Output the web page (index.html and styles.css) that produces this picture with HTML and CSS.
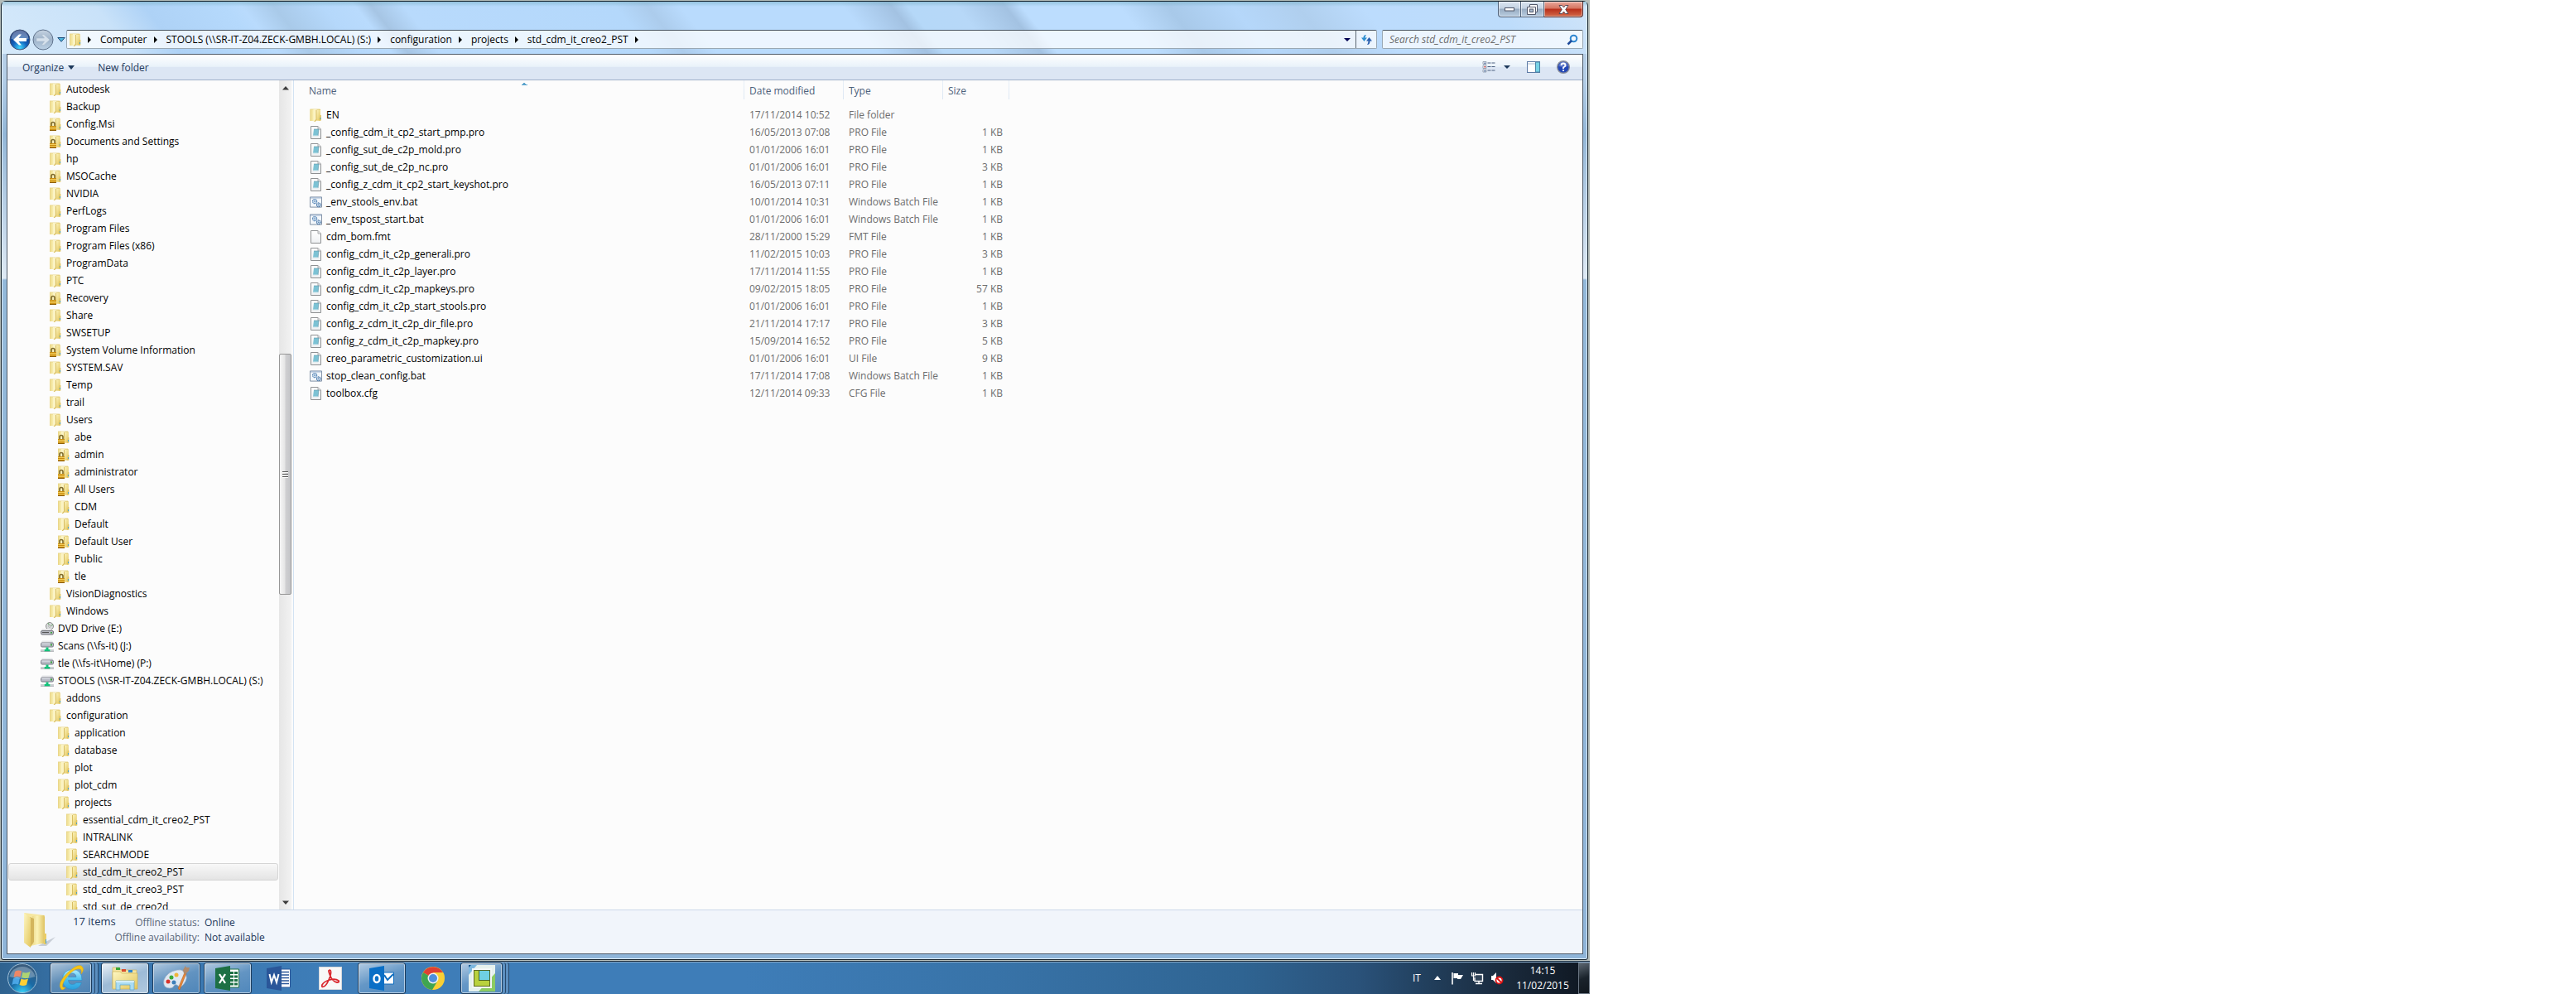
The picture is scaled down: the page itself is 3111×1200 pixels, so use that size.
FILE: index.html
```html
<!DOCTYPE html>
<html lang="en">
<head>
<meta charset="utf-8">
<title>std_cdm_it_creo2_PST</title>
<link rel="stylesheet" href="styles.css">
</head>
<body>
<svg class="sprites" aria-hidden="true">
  <defs>
    <linearGradient id="gold" x1="0" x2="1" y1="0" y2="0"><stop offset="0" stop-color="#ecd98a"/><stop offset=".4" stop-color="#fbf3b8"/><stop offset="1" stop-color="#dfc25f"/></linearGradient>
    <linearGradient id="gold2" x1="0" x2="1" y1="0" y2="1"><stop offset="0" stop-color="#fdf6c3"/><stop offset="1" stop-color="#e3c65c"/></linearGradient>
    <radialGradient id="orb" cx=".5" cy=".9" r=".9"><stop offset="0" stop-color="#3fd8ff"/><stop offset=".4" stop-color="#1263bd"/><stop offset="1" stop-color="#10286e"/></radialGradient>
    <linearGradient id="grayOrb" x1="0" x2="0" y1="0" y2="1"><stop offset="0" stop-color="#c6d3e1"/><stop offset=".5" stop-color="#9db2c9"/><stop offset="1" stop-color="#bcd2e6"/></linearGradient>
    <radialGradient id="startOrb" cx=".5" cy="1" r=".95"><stop offset="0" stop-color="#37d3fa"/><stop offset=".45" stop-color="#1a6aa5"/><stop offset="1" stop-color="#3a5c7d"/></radialGradient>
    <linearGradient id="ie" x1="0" x2="0" y1="0" y2="1"><stop offset="0" stop-color="#b4ecfd"/><stop offset=".5" stop-color="#4cc0ef"/><stop offset="1" stop-color="#2a9fdc"/></linearGradient>
    <linearGradient id="page" x1="0" x2="0" y1="0" y2="1"><stop offset="0" stop-color="#fff"/><stop offset="1" stop-color="#eef0f2"/></linearGradient>
  </defs>
  <symbol id="folder" viewBox="0 0 14 16">
    <path d="M0 1h5v14H0zM8 1h4.500v13.500H8z" fill="url(#gold)"/>
    <path d="M8 2h4.500v12.500H7z" fill="url(#gold2)"/>
    <path d="M12 8h1.300v6.500H11z" fill="#e0c25e"/>
    <path d="M12 11h1v2h-1z" fill="#4aa3c8"/>
    <path d="M0 1h1v14H0zM0 .5h12v1H0z" fill="#ead78c"/>
    <path d="M5 2h3v12l-2 2H5z" fill="#d8bd62"/>
    <path d="M4 1h2l1 1v11l-2 2.500H4z" fill="#fbf3c4"/>
  </symbol>
  <symbol id="locked" viewBox="0 0 14 16">
    <use href="#folder" width="14" height="16"/>
    <path d="M2 10V7.500a2 2 0 0 1 4 0V10" fill="none" stroke="#7d6a2c" stroke-width="1.600"/>
    <path d="M0 10h8v6H0z" fill="#c98d10"/><path d="M0 11.500h8M0 13.500h8" stroke="#f2cc5a"/><path d="M0 15.500h8" stroke="#8f620a"/>
  </symbol>
  <symbol id="netdrive" viewBox="0 0 16 15">
    <path d="M2 1h12l2 3H0z" fill="#e6e7ea"/><rect x=".5" y="3.500" width="15" height="5" rx="1.500" fill="#b9bcc6" stroke="#7a7d87"/>
    <path d="M1.500 4.500h10" stroke="#eceef4"/><path d="M12 5h2v2h-2z" fill="#3da53d"/>
    <path d="M6.500 9h3v2.500h2V14h-7v-2.500h2z" fill="#13c27a"/><path d="M0 12.500h4M12 12.500h4" stroke="#9aa0a6"/><path d="M0 14h16" stroke="#8b9196" stroke-width=".6"/>
  </symbol>
  <symbol id="dvd" viewBox="0 0 16 16">
    <circle cx="11" cy="5" r="4.500" fill="#d9dcdd" stroke="#8d8d8d"/><path d="M11 5L9 1M11 5l4-2" stroke="#68a368"/><circle cx="11" cy="5" r="1.300" fill="#fff" stroke="#888" stroke-width=".6"/>
    <path d="M2 8h8l4 1.500 2 1.500H0z" fill="#e7e7e9"/><rect x=".5" y="10.500" width="15" height="4.500" rx="1.500" fill="#b8bac2" stroke="#6f7178"/><path d="M2 12.500h8" stroke="#555"/><path d="M12 12h2v1.500h-2z" fill="#3da53d"/>
  </symbol>
  <symbol id="blank" viewBox="0 0 15 16">
    <path d="M1.500.5h8.500l3.500 3.500v11.500h-12z" fill="url(#page)" stroke="#8f9193"/><path d="M10 .5V4h3.500" fill="#e5e7e9" stroke="#a9abad"/>
  </symbol>
  <symbol id="doc" viewBox="0 0 15 16">
    <path d="M1.500.5h8.500l3.500 3.500v11.500h-12z" fill="url(#page)" stroke="#8f9193"/><path d="M10 .5V4h3.500" fill="#e5e7e9" stroke="#a9abad"/>
    <path d="M5 4h6l-1 8H4z" fill="#7cc2d4"/><path d="M5 4h6l-1 8" fill="none" stroke="#5c93a6" stroke-width=".6"/><path d="M4 12h6" stroke="#d5e9ee"/>
  </symbol>
  <symbol id="bat" viewBox="0 0 16 16">
    <path d="M.5 1.500h15v13H.5z" fill="#f3f7fb" stroke="#7b8ba0"/><path d="M1 2.500h14" stroke="#a9bdd4" stroke-width="1.500"/>
    <circle cx="6.500" cy="7" r="2.700" fill="#dbe8f5" stroke="#5383b4" stroke-width="1.300" stroke-dasharray="1.500 .6"/><circle cx="6.500" cy="7" r=".9" fill="#5383b4"/>
    <circle cx="11.500" cy="11.500" r="2.500" fill="#dbe8f5" stroke="#3e6fa3" stroke-width="1.300" stroke-dasharray="1.300 .6"/><circle cx="11.500" cy="11.500" r=".8" fill="#3e6fa3"/>
  </symbol>
</svg>

<div class="screen">
<div class="desktop">
  <main class="window">
    <header class="glass">
      <div class="caption">
        <button class="cap min" aria-label="Minimize"><svg width="14" height="8" viewBox="0 0 14 8"><rect x="1.500" y="2.500" width="11" height="3.500" fill="#fff" stroke="#52586a"/></svg></button>
        <button class="cap max" aria-label="Restore"><svg width="13" height="13" viewBox="0 0 13 13"><path d="M3.500.5h9v9h-2v3h-10v-9h3z" fill="#fff" stroke="#52586a"/><path d="M3.500 3.500h7v6" fill="none" stroke="#52586a"/><rect x="3.500" y="6" width="4" height="3.500" fill="#a9bacd" stroke="#52586a"/></svg></button>
        <button class="cap close" aria-label="Close"><svg width="13" height="11" viewBox="0 0 13 11"><path d="M1 .5h3.500l2 2.500 2-2.500H12L8.800 5.500 12 10.500H8.500l-2-2.500-2 2.500H1l3.200-5z" fill="#fff" stroke="#5b4a55"/></svg></button>
      </div>
      <div class="navrow">
        <div class="travel">
          <button class="back" aria-label="Back"><svg width="26" height="26" viewBox="0 0 26 26"><circle cx="13" cy="13" r="12" fill="url(#orb)" stroke="#3f5275"/><path d="M2.500 12a10.500 10.500 0 0 1 21 0q-10 3-21 0z" fill="#fff" opacity=".35"/><path d="M5 13l7-6.500h3L11.500 11H21v4h-9.500l3.500 4.500h-3z" fill="#fff"/></svg></button>
          <button class="forward" aria-label="Forward"><svg width="26" height="26" viewBox="0 0 26 26"><circle cx="13" cy="13" r="12" fill="url(#grayOrb)" stroke="#5f728c"/><path d="M21 13l-7-6.500h-3l3.500 4.500H5v4h9.500L11 19.500h3z" fill="#d5e0eb" stroke="#a9bacd" stroke-width=".6"/></svg></button>
          <button class="recent" aria-label="Recent pages"><svg width="10" height="6" viewBox="0 0 10 6"><path d="M.8.5h8.400L5 5.300z" fill="#4fb6dd" stroke="#1b4a78"/></svg></button>
        </div>
        <nav class="address" aria-label="Address">
          <svg class="ico14"><use href="#folder"/></svg>
          <ol class="crumbs">
            <li><a href="#">Computer</a></li>
            <li><a href="#">STOOLS (\\SR-IT-Z04.ZECK-GMBH.LOCAL) (S:)</a></li>
            <li><a href="#">configuration</a></li>
            <li><a href="#">projects</a></li>
            <li class="last"><a href="#">std_cdm_it_creo2_PST</a></li>
          </ol>
          <button class="drop" aria-label="Previous locations"><svg width="8" height="4" viewBox="0 0 8 4"><path d="M0 0h8L4 4z" fill="#000052"/></svg></button>
          <button class="refresh" aria-label="Refresh"><svg width="15" height="14" viewBox="0 0 15 14"><path d="M7 1Q3.500 1 3.500 4.500H1L4.500 9 8 4.500H5.500Q5.500 3 7 1z" fill="#2f8fd0"/><path d="M8 13q3.500 0 3.500-4.500H14L10.500 4 7 8.500h2.500Q9.500 11 8 13z" fill="#2a5fae"/></svg></button>
        </nav>
        <form class="search">
          <input type="search" aria-label="Search" placeholder="Search std_cdm_it_creo2_PST">
          <button type="button" aria-label="Search"><svg width="14" height="14" viewBox="0 0 14 14"><circle cx="8.500" cy="5.500" r="3.800" fill="none" stroke="#2f86cf" stroke-width="2"/><path d="M6 8L1.500 12.500" stroke="#1f4a9a" stroke-width="2.500"/></svg></button>
        </form>
      </div>
    </header>

    <div class="frame">
      <div class="toolbar">
        <button class="tool">Organize<svg width="8" height="5" viewBox="0 0 8 5"><path d="M0 0h8L4 5z" fill="#1e395b"/></svg></button>
        <button class="tool">New folder</button>
        <div class="tools-right">
          <button class="views" aria-label="Change your view"><svg width="16" height="14" viewBox="0 0 16 14"><path d="M1 .5h4v3H1zM1 5h4v3.500H1zM1 10h4v3H1z" fill="#fff" stroke="#9aa5b5"/><path d="M2.500 1.500h1.500v1.500H2.500zM2.500 11h1.500v1.500H2.500z" fill="#3a5f9a"/><path d="M2.500 6h1.500v1.500H2.500z" fill="#c22"/><path d="M6.500 2h9M6.500 6.500h9M6.500 11h9" stroke="#4a5e7e" stroke-dasharray="4 1"/></svg><svg width="8" height="4" viewBox="0 0 8 4"><path d="M0 0h8L4 4z" fill="#1e395b"/></svg></button>
          <button aria-label="Show the preview pane"><svg width="16" height="14" viewBox="0 0 16 14"><rect x=".5" y=".5" width="15" height="13" fill="#fff" stroke="#5d7ba6"/><path d="M1 3h10" stroke="#a9bbd4"/><rect x="10.500" y="1" width="5" height="12" fill="#79d3e6" stroke="#4c86a8"/></svg></button>
          <button aria-label="Get help"><svg width="16" height="16" viewBox="0 0 16 16"><circle cx="8" cy="8" r="7.300" fill="#2347b5" stroke="#8a8f9c" stroke-width="1.400"/><path d="M2.500 7a5.500 5.500 0 0 1 11 0q-5 2-11 0z" fill="#fff" opacity=".25"/><path d="M5.500 6q0-2.500 2.500-2.500T10.500 6Q10.500 7.200 8 8.500V10" fill="none" stroke="#fff" stroke-width="1.800"/><circle cx="8" cy="12" r="1.100" fill="#fff"/></svg></button>
        </div>
      </div>

      <div class="panes">
        <nav class="tree" aria-label="Folders">
          <ul>
            <li><a href="#"><svg><use href="#folder"/></svg>Autodesk</a></li>
            <li><a href="#"><svg><use href="#folder"/></svg>Backup</a></li>
            <li><a href="#"><svg><use href="#locked"/></svg>Config.Msi</a></li>
            <li><a href="#"><svg><use href="#locked"/></svg>Documents and Settings</a></li>
            <li><a href="#"><svg><use href="#folder"/></svg>hp</a></li>
            <li><a href="#"><svg><use href="#locked"/></svg>MSOCache</a></li>
            <li><a href="#"><svg><use href="#folder"/></svg>NVIDIA</a></li>
            <li><a href="#"><svg><use href="#folder"/></svg>PerfLogs</a></li>
            <li><a href="#"><svg><use href="#folder"/></svg>Program Files</a></li>
            <li><a href="#"><svg><use href="#folder"/></svg>Program Files (x86)</a></li>
            <li><a href="#"><svg><use href="#folder"/></svg>ProgramData</a></li>
            <li><a href="#"><svg><use href="#folder"/></svg>PTC</a></li>
            <li><a href="#"><svg><use href="#locked"/></svg>Recovery</a></li>
            <li><a href="#"><svg><use href="#folder"/></svg>Share</a></li>
            <li><a href="#"><svg><use href="#folder"/></svg>SWSETUP</a></li>
            <li><a href="#"><svg><use href="#locked"/></svg>System Volume Information</a></li>
            <li><a href="#"><svg><use href="#folder"/></svg>SYSTEM.SAV</a></li>
            <li><a href="#"><svg><use href="#folder"/></svg>Temp</a></li>
            <li><a href="#"><svg><use href="#folder"/></svg>trail</a></li>
            <li><a href="#"><svg><use href="#folder"/></svg>Users</a></li>
            <li class="l2"><a href="#"><svg><use href="#locked"/></svg>abe</a></li>
            <li class="l2"><a href="#"><svg><use href="#locked"/></svg>admin</a></li>
            <li class="l2"><a href="#"><svg><use href="#locked"/></svg>administrator</a></li>
            <li class="l2"><a href="#"><svg><use href="#locked"/></svg>All Users</a></li>
            <li class="l2"><a href="#"><svg><use href="#folder"/></svg>CDM</a></li>
            <li class="l2"><a href="#"><svg><use href="#folder"/></svg>Default</a></li>
            <li class="l2"><a href="#"><svg><use href="#locked"/></svg>Default User</a></li>
            <li class="l2"><a href="#"><svg><use href="#folder"/></svg>Public</a></li>
            <li class="l2"><a href="#"><svg><use href="#locked"/></svg>tle</a></li>
            <li><a href="#"><svg><use href="#folder"/></svg>VisionDiagnostics</a></li>
            <li><a href="#"><svg><use href="#folder"/></svg>Windows</a></li>
            <li class="l0"><a href="#"><svg><use href="#dvd"/></svg>DVD Drive (E:)</a></li>
            <li class="l0"><a href="#"><svg><use href="#netdrive"/></svg>Scans (\\fs-it) (J:)</a></li>
            <li class="l0"><a href="#"><svg><use href="#netdrive"/></svg>tle (\\fs-it\Home) (P:)</a></li>
            <li class="l0"><a href="#"><svg><use href="#netdrive"/></svg>STOOLS (\\SR-IT-Z04.ZECK-GMBH.LOCAL) (S:)</a></li>
            <li><a href="#"><svg><use href="#folder"/></svg>addons</a></li>
            <li><a href="#"><svg><use href="#folder"/></svg>configuration</a></li>
            <li class="l2"><a href="#"><svg><use href="#folder"/></svg>application</a></li>
            <li class="l2"><a href="#"><svg><use href="#folder"/></svg>database</a></li>
            <li class="l2"><a href="#"><svg><use href="#folder"/></svg>plot</a></li>
            <li class="l2"><a href="#"><svg><use href="#folder"/></svg>plot_cdm</a></li>
            <li class="l2"><a href="#"><svg><use href="#folder"/></svg>projects</a></li>
            <li class="l3"><a href="#"><svg><use href="#folder"/></svg>essential_cdm_it_creo2_PST</a></li>
            <li class="l3"><a href="#"><svg><use href="#folder"/></svg>INTRALINK</a></li>
            <li class="l3"><a href="#"><svg><use href="#folder"/></svg>SEARCHMODE</a></li>
            <li class="l3 selected"><a href="#"><svg><use href="#folder"/></svg>std_cdm_it_creo2_PST</a></li>
            <li class="l3"><a href="#"><svg><use href="#folder"/></svg>std_cdm_it_creo3_PST</a></li>
            <li class="l3"><a href="#"><svg><use href="#folder"/></svg>std_sut_de_creo2d</a></li>
          </ul>
        </nav>
        <div class="scrollbar">
          <svg width="8" height="5" viewBox="0 0 8 5"><path d="M4 0l4 4.500H0z" fill="#3c3c3c"/></svg>
          <div class="track"><div class="thumb"><i></i><i></i><i></i></div></div>
          <svg width="8" height="5" viewBox="0 0 8 5"><path d="M4 5L0 .5h8z" fill="#3c3c3c"/></svg>
        </div>
        <section class="files">
          <table>
            <colgroup><col class="c-name"><col class="c-date"><col class="c-type"><col class="c-size"><col></colgroup>
            <thead><tr><th class="sorted">Name</th><th>Date modified</th><th>Type</th><th>Size</th><td></td></tr></thead>
            <tbody>
              <tr><td><svg><use href="#folder"/></svg>EN</td><td>17/11/2014 10:52</td><td>File folder</td><td></td></tr>
              <tr><td><svg><use href="#doc"/></svg>_config_cdm_it_cp2_start_pmp.pro</td><td>16/05/2013 07:08</td><td>PRO File</td><td>1 KB</td></tr>
              <tr><td><svg><use href="#doc"/></svg>_config_sut_de_c2p_mold.pro</td><td>01/01/2006 16:01</td><td>PRO File</td><td>1 KB</td></tr>
              <tr><td><svg><use href="#doc"/></svg>_config_sut_de_c2p_nc.pro</td><td>01/01/2006 16:01</td><td>PRO File</td><td>3 KB</td></tr>
              <tr><td><svg><use href="#doc"/></svg>_config_z_cdm_it_cp2_start_keyshot.pro</td><td>16/05/2013 07:11</td><td>PRO File</td><td>1 KB</td></tr>
              <tr><td><svg><use href="#bat"/></svg>_env_stools_env.bat</td><td>10/01/2014 10:31</td><td>Windows Batch File</td><td>1 KB</td></tr>
              <tr><td><svg><use href="#bat"/></svg>_env_tspost_start.bat</td><td>01/01/2006 16:01</td><td>Windows Batch File</td><td>1 KB</td></tr>
              <tr><td><svg><use href="#blank"/></svg>cdm_bom.fmt</td><td>28/11/2000 15:29</td><td>FMT File</td><td>1 KB</td></tr>
              <tr><td><svg><use href="#doc"/></svg>config_cdm_it_c2p_generali.pro</td><td>11/02/2015 10:03</td><td>PRO File</td><td>3 KB</td></tr>
              <tr><td><svg><use href="#doc"/></svg>config_cdm_it_c2p_layer.pro</td><td>17/11/2014 11:55</td><td>PRO File</td><td>1 KB</td></tr>
              <tr><td><svg><use href="#doc"/></svg>config_cdm_it_c2p_mapkeys.pro</td><td>09/02/2015 18:05</td><td>PRO File</td><td>57 KB</td></tr>
              <tr><td><svg><use href="#doc"/></svg>config_cdm_it_c2p_start_stools.pro</td><td>01/01/2006 16:01</td><td>PRO File</td><td>1 KB</td></tr>
              <tr><td><svg><use href="#doc"/></svg>config_z_cdm_it_c2p_dir_file.pro</td><td>21/11/2014 17:17</td><td>PRO File</td><td>3 KB</td></tr>
              <tr><td><svg><use href="#doc"/></svg>config_z_cdm_it_c2p_mapkey.pro</td><td>15/09/2014 16:52</td><td>PRO File</td><td>5 KB</td></tr>
              <tr><td><svg><use href="#doc"/></svg>creo_parametric_customization.ui</td><td>01/01/2006 16:01</td><td>UI File</td><td>9 KB</td></tr>
              <tr><td><svg><use href="#bat"/></svg>stop_clean_config.bat</td><td>17/11/2014 17:08</td><td>Windows Batch File</td><td>1 KB</td></tr>
              <tr><td><svg><use href="#doc"/></svg>toolbox.cfg</td><td>12/11/2014 09:33</td><td>CFG File</td><td>1 KB</td></tr>
            </tbody>
          </table>
        </section>
      </div>

      <footer class="details">
        <svg width="40" height="44" viewBox="0 0 40 44"><path d="M18 40h10l11-11-8 4-4 2z" fill="#8d93a3" opacity=".4"/><path d="M1 0l25 3v33l-17 4z" fill="#f6e7a0"/><path d="M11 4l14-1 1 2v32l-15 1z" fill="url(#gold)"/><path d="M8 5l5 2v28l-4 6z" fill="#d3b55c"/><path d="M1 0l8 6v36L1 36z" fill="url(#gold2)"/><path d="M25 25h3v13h-3z" fill="#e9cc66"/><path d="M27 32h1v5h-1z" fill="#3f9dd2"/></svg>
        <p class="count">17 items</p>
        <dl><dt>Offline status:</dt><dd>Online</dd><dt>Offline availability:</dt><dd>Not available</dd></dl>
      </footer>
    </div>
  </main>

  <footer class="taskbar">
    <button class="start" aria-label="Start"><svg width="40" height="38" viewBox="0 0 40 38"><circle cx="20" cy="19" r="17.500" fill="url(#startOrb)" stroke="#9fc0d8"/><path d="M11 11q4-2.500 8-.5l-1.500 7q-4-1.500-8 .5z" fill="#e8592a"/><path d="M20.500 11.500q4 2 9-.5l-2 7.500q-4.500 1.500-8.500-.5z" fill="#8fc43c"/><path d="M9 19.500q4-2.500 8-.5l-2 7.500q-4-1.500-7.500.5z" fill="#4aa6e6"/><path d="M18.500 19.500q4 2 8.500 0L25 27q-4 2-8.500 0z" fill="#fbcf35"/><path d="M4.500 17a16 16 0 0 1 31 0q-15 5-31 0z" fill="#fff" opacity=".28"/></svg></button>
    <button class="task open stack" aria-label="Internet Explorer"><svg width="32" height="32" viewBox="0 0 32 32"><path d="M29 18.500H12.500q.5 5 5 5 3 0 4.500-2h6.500q-3 8-11 8Q5.500 29 5.500 17.500T17.500 5.500q11.500 0 11.500 13zM12.500 14.500h9.500q-.5-4.500-4.700-4.500t-4.800 4.500z" fill="url(#ie)" stroke="#2b8cc6" stroke-width=".6"/><path d="M4 29.500Q-2 22 12 9T30 3q2 3-2 8 1-5-1-6Q21 3 13 12T5.500 26q1 2 4 1-3 4-5.500 2.500z" fill="#f5c518" stroke="#d39a10" stroke-width=".4"/></svg></button>
    <button class="task open active" aria-label="Windows Explorer"><svg width="32" height="32" viewBox="0 0 32 32"><path d="M1 3h8l2 3h19v22H1z" fill="#f3e3a0" stroke="#c9ac55" stroke-width=".6"/><path d="M5 3h5v3H5z" fill="#37a637"/><path d="M12 5h5v3h-5z" fill="#d94b2c"/><path d="M20 6h5v3h-5z" fill="#2f86cf"/><path d="M1 8h9l2 2h19v19H1z" fill="url(#gold2)" stroke="#cfae4a" stroke-width=".6"/><path d="M5 19h22v11h-5v-6H10v6H5z" fill="#a9dcf2" stroke="#5fa5c9" stroke-width=".7"/><path d="M5 20h22" stroke="#e9f8ff" stroke-width="1.500"/></svg></button>
    <button class="task open" aria-label="Paint"><svg width="32" height="32" viewBox="0 0 32 32"><path d="M17 6Q5 8 1 18q-2 10 7 10 4 0 5-3 2-3 5 0 3 3 6-1 8-9 1-16-3-3-7-2z" fill="#dfe8f2" stroke="#9db0c6" stroke-width=".7"/><circle cx="6" cy="20" r="2.500" fill="#d9342b"/><circle cx="10" cy="15" r="2.500" fill="#3aa93a"/><circle cx="16" cy="12" r="2.500" fill="#efb43a"/><circle cx="13" cy="21" r="2.500" fill="#3d7fba"/><path d="M26 9l2 1-8 20q-3-1-1-4z" fill="#e8873a" stroke="#a9581c" stroke-width=".5"/><path d="M25 10l-1-4 3-5 1 2 4 0-1 4-4 4z" fill="#b08a6c"/></svg></button>
    <button class="task open" aria-label="Excel"><svg width="30" height="32" viewBox="0 0 30 32"><path d="M16 5h12.500v22H16z" fill="#fff" stroke="#1d7044"/><path d="M18 8h4v3h-4zM23 8h4v3h-4zM18 12.500h4v3h-4zM23 12.500h4v3h-4zM18 17h4v3h-4zM23 17h4v3h-4zM18 21.500h4v3h-4zM23 21.500h4v3h-4z" fill="#1d7044"/><path d="M0 4l18-3v30L0 28z" fill="#1d7044"/><path d="M5 11l7 11M12 11L5 22" stroke="#fff" stroke-width="2.300"/></svg></button>
    <button class="task" aria-label="Word"><svg width="30" height="32" viewBox="0 0 30 32"><path d="M16 5h12.500v22H16z" fill="#fff" stroke="#2a5699"/><path d="M18 8.500h9M18 12h9M18 15.500h9M18 19h9M18 22.500h9" stroke="#2a5699" stroke-width="1.500"/><path d="M0 4l18-3v30L0 28z" fill="#2a5699"/><path d="M3.500 11l2.300 10L9 12l3 9 2.500-10" fill="none" stroke="#fff" stroke-width="2"/></svg></button>
    <button class="task" aria-label="Adobe Reader"><svg width="28" height="28" viewBox="0 0 28 28"><rect x=".5" y=".5" width="27" height="27" fill="#f8f8f8" stroke="#d5d8dc"/><path d="M4 22q2-4 9-6t11 1q1 2-2 2-5-1-7.500-6.500T12 5q2-2 2.500 1T12 16 6 24q-3 1-2-2z" fill="none" stroke="#d9272e" stroke-width="1.800"/></svg></button>
    <button class="task open" aria-label="Outlook"><svg width="30" height="32" viewBox="0 0 30 32"><path d="M16 9h13.500v14H16z" fill="#fff" stroke="#0f6dbf"/><path d="M18 12l4 6 7-7" fill="none" stroke="#0f6dbf" stroke-width="2"/><path d="M0 4l18-3v30L0 28z" fill="#0a6fc6"/><ellipse cx="9" cy="16.500" rx="3.500" ry="4.500" fill="none" stroke="#fff" stroke-width="2.400"/></svg></button>
    <button class="task" aria-label="Chrome"><svg width="28" height="28" viewBox="0 0 28 28"><circle cx="14" cy="14" r="14" fill="#f9cf34"/><path d="M14 14L2 7a14 14 0 0 1 24 0z" fill="#df3f33"/><path d="M2 7a14 14 0 0 0 11 21l6-10-5-4z" fill="#3fa551"/><path d="M14 7h12q3 6 0 12l-7-2z" fill="#f9cf34"/><circle cx="14" cy="14" r="6.500" fill="#f3f3f3"/><circle cx="14" cy="14" r="5" fill="#4f8fdc"/></svg></button>
    <button class="task open stack" aria-label="Creo"><svg width="32" height="32" viewBox="0 0 32 32"><rect width="32" height="32" fill="#e6f1ee"/><path d="M0 0h10L0 12z" fill="#7db8e0"/><path d="M0 0h3L0 3z" fill="#12538c"/><path d="M32 32H12l20-22z" fill="#8ccb62"/><path d="M4 4h24v24H4z" fill="#f3f6f6"/><rect x="6.500" y="6.500" width="19" height="19" fill="#b9d13e" stroke="#5c6b23"/><rect x="12.500" y="6.500" width="13" height="12" fill="#6fd0e4" stroke="#4f6a2a"/></svg></button>

    <div class="tray">
      <span class="lang">IT</span>
      <button aria-label="Show hidden icons"><svg width="8" height="5" viewBox="0 0 8 5"><path d="M4 0l4 5H0z" fill="#fff"/></svg></button>
      <button aria-label="Action Center"><svg width="16" height="16" viewBox="0 0 16 16"><path d="M2 1v14.500" stroke="#fff" stroke-width="1.600"/><path d="M3.500 2H9v2h6l-1.500 2.500L12 9H8V8H3.500z" fill="#fff"/></svg></button>
      <button aria-label="Network"><svg width="16" height="16" viewBox="0 0 16 16"><path d="M6 3.500h8.500v8H5V7" fill="#32455a" stroke="#fff" stroke-width="1.400"/><path d="M10 12v2M6 14.500h8" stroke="#fff" stroke-width="1.400"/><path d="M1.500 1v4h4V1M3.500 1v10" fill="none" stroke="#fff" stroke-width="1.200"/></svg></button>
      <button aria-label="Volume"><svg width="16" height="16" viewBox="0 0 16 16"><path d="M1 5h2l4-4v13l-4-4H1z" fill="#fff"/><circle cx="10.500" cy="10.500" r="4" fill="#fff" stroke="#dd1111" stroke-width="1.800"/><path d="M7.500 7.500l6 6" stroke="#dd1111" stroke-width="1.800"/></svg></button>
      <time class="clock" datetime="2015-02-11T14:15"><span>14:15</span><span>11/02/2015</span></time>
      <button class="peek" aria-label="Show desktop"></button>
    </div>
  </footer>
</div>
</div>
</body>
</html>
```
FILE: styles.css
```css
* { box-sizing: border-box; }

body {
  margin: 0;
  background: #fff;
  font: 12px/21px "Open Sans", "Noto Sans", sans-serif;
  color: #000;
}

button, input {
  margin: 0;
  padding: 0;
  border: 0;
  background: none;
  font: inherit;
  color: inherit;
}

button { display: flex; align-items: center; justify-content: center; }
a { color: inherit; text-decoration: none; }
ul, ol, dl, p { margin: 0; padding: 0; list-style: none; }
svg { display: block; flex: none; }
.sprites { position: absolute; width: 0; height: 0; }

.screen {
  display: grid;
  grid-template-columns: 1920fr 1191fr;
  height: 100vh;
}

.desktop {
  display: flex;
  flex-direction: column;
  min-height: 0;
  background: #b4bcb9;
}

/* Window and its glass border */
.window {
  flex: 1;
  min-height: 0;
  display: flex;
  flex-direction: column;
  margin: 1px 2px 1px 1px;
  padding: 0 5px 6px 6px;
  border: 1px solid #17242e;
  border-radius: 6px 6px 3px 3px;
  box-shadow: inset 0 0 0 1px #e3f1fb;
  background: linear-gradient(#b5cfe8 0, #b5cfe8 90px, #93b7d8 160px, #dfeaf5 334px, #93b9da 336px, #8fb5d9 100%);
}

.glass {
  flex: none;
  margin: 0 -4px 0 -5px;
  padding: 0 4px 6px 5px;
  background:
    linear-gradient(rgba(110, 170, 190, .5), rgba(255, 255, 255, 0) 6px),
    linear-gradient(52deg, #d5e9fa 0, #c9e2f9 8%, #aed2f6 11%, #b5d9fc 16%, #b9dbfd 17%, #a9cae9 19%, #b5d8fb 22%, #b9dbfd 24%, #a6c5e4 25%, #b8dafc 27%, #b4d8fb 40%, #acccec 42%, #b9dbfd 44%, #b9dbfd 54%, #a3c2e2 57%, #b5d8f8 58%, #b7d8f8 61%, #a3c2e2 64%, #bcddfe 65%, #bcddfe 71%, #a8c9e9 74%, #b5d7fa 78%, #b0cfee 82%, #bcdcfd 86%, #bddcfb 94%, #cfe4f9 100%);
}

.caption { display: flex; justify-content: flex-end; height: 34px; align-items: flex-start; }

.cap {
  width: 28px;
  height: 19px;
  border: 1px solid #50627a;
  border-top: 0;
  box-shadow: inset 0 0 0 1px rgba(255, 255, 255, .5);
  background: linear-gradient(#dbe6f1 0, #c3d2e2 45%, #98acc2 50%, #b9cde0 100%);
}
.min { border-radius: 0 0 0 4px; }
.max { border-left: 0; }
.close {
  width: 47px;
  border-left: 0;
  border-color: #5a2a2a;
  border-radius: 0 0 4px 0;
  background: linear-gradient(#e9a99d 0, #d5735f 45%, #b82f1a 50%, #d2694a 100%);
}

.navrow { display: flex; align-items: center; gap: 6px; height: 23px; }
.travel {
  display: flex;
  align-items: center;
  gap: 2px;
  width: 66px;
  padding-left: 3px;
}
.back, .forward { height: 26px; }
.recent { margin-left: 2px; }

.address, .search {
  display: flex;
  align-items: center;
  height: 23px;
  border: 1px solid #9aa8b4;
  border-top-color: #48545f;
  border-radius: 2px;
  background: rgba(255, 255, 255, .72);
}
.address { flex: 1; padding-left: 3px; }
.ico14 { width: 14px; height: 16px; }
.crumbs { display: flex; align-items: center; margin-right: auto; padding-left: 8px; }
.crumbs li { display: flex; align-items: center; }
.crumbs li::before, .crumbs .last::after {
  content: "";
  width: 4px;
  margin-right: 7px;
  border: 4px solid transparent;
  border-left-color: #000;
  border-right: 0;
}
.crumbs li + li::before, .crumbs .last::after { margin-left: 8px; }
.drop { padding: 0 6px; }
.refresh { width: 25px; align-self: stretch; border-left: 1px solid #5c6873; }

.search { width: 249px; padding: 0 5px 0 8px; }
.search input { flex: 1; min-width: 0; font-style: italic; outline: 0; }
.search input::placeholder { color: #6d6d6d; opacity: 1; }
.search { flex: 0 0 243px; }

/* Client area */
.frame {
  flex: 1;
  min-height: 0;
  display: flex;
  flex-direction: column;
  border: 1px solid #4f5b69;
  background: #fcfcfc;
}

.toolbar {
  flex: none;
  display: flex;
  align-items: center;
  gap: 28px;
  height: 31px;
  padding: 0 15px 0 18px;
  border-bottom: 1px solid #a0afc9;
  background: linear-gradient(#fff 0, #e9f2fa 48%, #dce6f4 50%, #dce6f4 100%);
  color: #1e395b;
}
.tool { gap: 5px; }
.tools-right { display: flex; align-items: center; gap: 20px; margin-left: auto; }
.views { gap: 10px; }

.panes { flex: 1; min-height: 0; display: flex; }

.tree { width: 328px; overflow: hidden; padding-left: 1px; }
.tree li { height: 21px; padding-left: 49px; border: 1px solid transparent; margin-right: 1px; }
.tree a { display: flex; align-items: center; gap: 6px; height: 19px; white-space: nowrap; }
.tree svg { width: 14px; height: 16px; }
.tree .l0 { padding-left: 38px; }
.tree .l0 a { gap: 5px; }
.tree .l0 svg { width: 16px; }
.tree .l2 { padding-left: 59px; }
.tree .l3 { padding-left: 69px; }
.tree .selected {
  border-color: #d5d5d5;
  border-radius: 3px;
  background: linear-gradient(#f8f8f8, #e4e4e4);
}

.scrollbar {
  display: flex;
  flex-direction: column;
  align-items: center;
  justify-content: space-between;
  width: 18px;
  padding: 7px 2px 6px 0;
  border-right: 1px solid #d3e3f3;
  background: linear-gradient(90deg, #e6e6e6, #f1f1f1 14px, #fcfcfc 16px);
}
.track { flex: 1; align-self: stretch; padding-top: 318px; }
.thumb {
  display: flex;
  flex-direction: column;
  align-items: center;
  justify-content: center;
  gap: 1px;
  height: 291px;
  border: 1px solid #979797;
  border-radius: 2px;
  background: linear-gradient(90deg, #f5f5f5, #e6e6e6 45%, #cfcfd1 55%, #c4c5c8);
}
.thumb i { width: 7px; height: 2px; border-bottom: 1px solid #fff; background: #555; }

.files { flex: 1; min-width: 0; overflow: hidden; }
.files table { width: 100%; table-layout: fixed; border-collapse: collapse; }
.c-name { width: 544px; }
.c-date, .c-type { width: 120px; }
.c-size { width: 80px; }
.files th, .files td { padding: 0 8px 0 6px; white-space: nowrap; }
.files th {
  height: 31px;
  padding-top: 2px;
  padding-bottom: 8px;
  text-align: left;
  font-weight: 400;
  color: #4c607a;
  background: linear-gradient(#e8f0f8, #dce7f3) right top / 1px 23px no-repeat;
}
.files th:first-child { padding-left: 18px; }
.files .sorted {
  background:
    conic-gradient(from 135deg at 50% 0, #5aa3cc 90deg, transparent 0) 274px 2px / 8px 4px no-repeat,
    linear-gradient(#e8f0f8, #dce7f3) right top / 1px 23px no-repeat;
}
.files tbody td { height: 21px; color: #6d6d6d; }
.files tbody td:first-child {
  display: flex;
  align-items: center;
  gap: 5px;
  padding-left: 19px;
  color: #000;
}
.files tbody svg { width: 15px; height: 16px; }
.files tbody td:nth-child(4) { text-align: right; }

.details {
  flex: none;
  display: flex;
  align-items: flex-start;
  height: 53px;
  padding: 3px 19px;
  border-top: 1px solid #ccd9ea;
  background: #f1f5fb;
  color: #1e395b;
}
.count { width: 49px; margin-left: 20px; font-size: 13px; white-space: nowrap; }
.details dl {
  display: grid;
  grid-template-columns: 104px auto;
  column-gap: 6px;
  padding-top: 3px;
  line-height: 18px;
}
.details dt { display: flex; justify-content: flex-end; color: #5a6779; white-space: nowrap; }
.details dd { margin: 0; }

/* Taskbar */
.taskbar {
  flex: none;
  display: flex;
  align-items: center;
  gap: 4px;
  height: 40px;
  border-top: 1px solid #1c2c3c;
  box-shadow: inset 0 1px 0 #86a9c8;
  background: linear-gradient(90deg, #2f628f 0, #3874ab 90px, #3e7db8 400px, #3e7db8 900px, #3873a8 1200px, #2f6492 1500px, #2a527a 1640px, #22405e 1720px, #1a2a3c 1820px, #0e1620 100%);
}
.start { width: 56px; padding-right: 2px; }
.task { width: 58px; height: 38px; }
.open {
  border: 1px solid #1d3c5c;
  border-radius: 3px;
  box-shadow: inset 0 0 0 1px rgba(255, 255, 255, .55);
  background: linear-gradient(160deg, rgba(255, 255, 255, .6), rgba(255, 255, 255, .2) 50%, rgba(255, 255, 255, .1));
}
.active { background: linear-gradient(160deg, rgba(255, 255, 255, .9), rgba(255, 255, 255, .5) 50%, rgba(255, 255, 255, .6)); }
.stack {
  width: 51px;
  margin-right: 7px;
  box-shadow: inset 0 0 0 1px rgba(255, 255, 255, .55), 3px 0 0 #5b8fc0, 4px 0 0 #26486c, 7px 0 0 #5b8fc0, 8px 0 0 #26486c;
}

.tray { display: flex; align-items: center; align-self: stretch; margin-left: auto; color: #fff; }
.tray button { width: 24px; }
.lang { width: 18px; }
.clock { display: flex; flex-direction: column; width: 86px; text-align: center; line-height: 18px; }
.tray .peek {
  width: 14px;
  height: 38px;
  border: 1px solid #6b7683;
  background: linear-gradient(160deg, #5b6670, #1a232c 50%, #10171e);
}
```
